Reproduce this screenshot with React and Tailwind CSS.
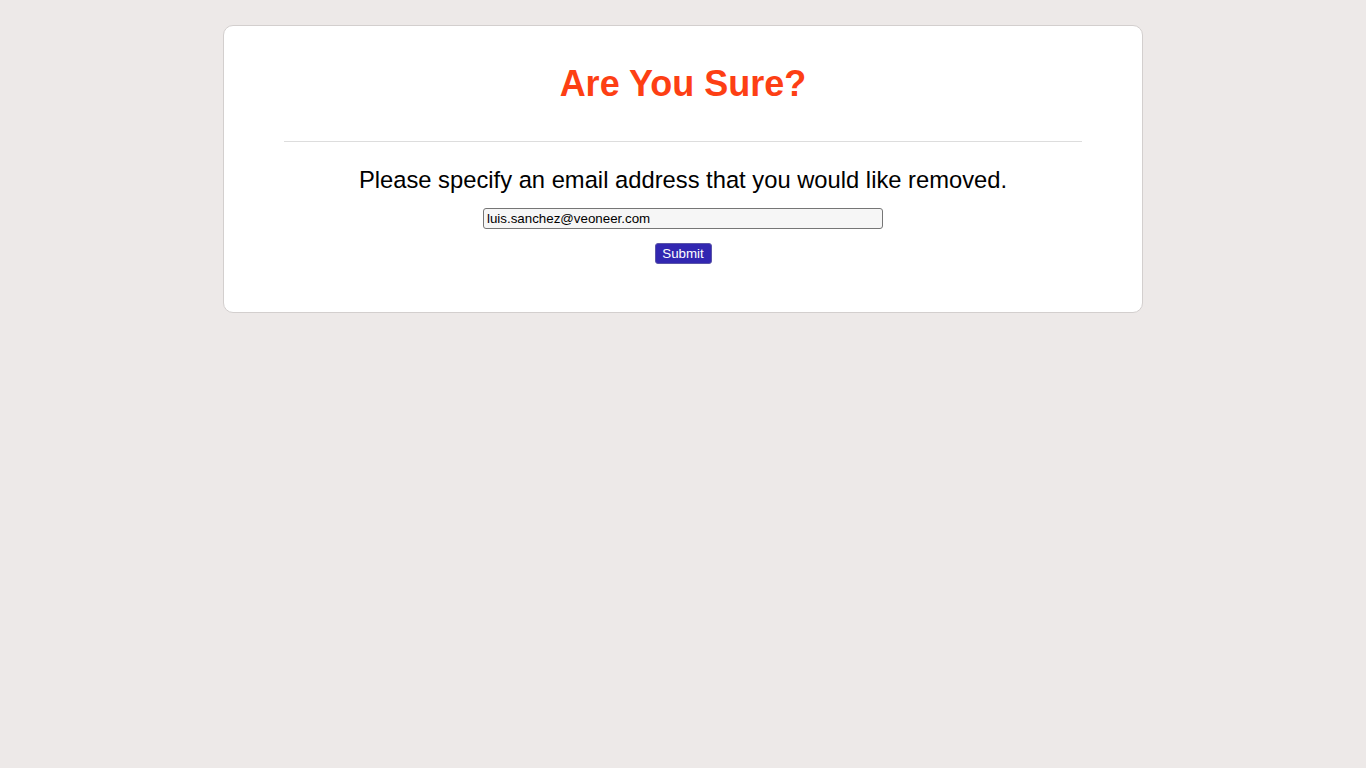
import React from "react";

export default function App() {
  return (
    <div className="min-h-screen bg-[#ede9e8] pt-[25px] font-['Liberation_Sans',Arial,sans-serif]">
      <div className="mx-auto w-[920px] rounded-[10px] border border-[#d3cfce] bg-white px-[60px] pt-[37px] pb-[48px]">
        <h1 className="text-center text-[36px] leading-[42px] font-bold text-[#fd3f14]">
          Are You Sure?
        </h1>
        <hr className="mt-[36px] border-0 border-t border-[#dddddd]" />
        <p className="mt-[24px] text-center text-[23.75px] leading-[28px] text-black">
          Please specify an email address that you would like removed.
        </p>
        <form className="flex flex-col items-center" onSubmit={(e) => e.preventDefault()}>
          <input
            type="text"
            defaultValue="luis.sanchez@veoneer.com"
            className="mt-[14px] h-[21px] w-[400px] rounded-[3px] border border-[#767676] bg-[#f6f6f6] px-[3px] text-[13.333px] leading-[19px] text-black outline-none"
          />
          <button
            type="submit"
            className="mt-[14px] h-[21px] w-[57px] rounded-[3px] border border-[#5b55a8] bg-[#3227b1] text-[13.333px] leading-[19px] text-white"
          >
            Submit
          </button>
        </form>
      </div>
    </div>
  );
}
